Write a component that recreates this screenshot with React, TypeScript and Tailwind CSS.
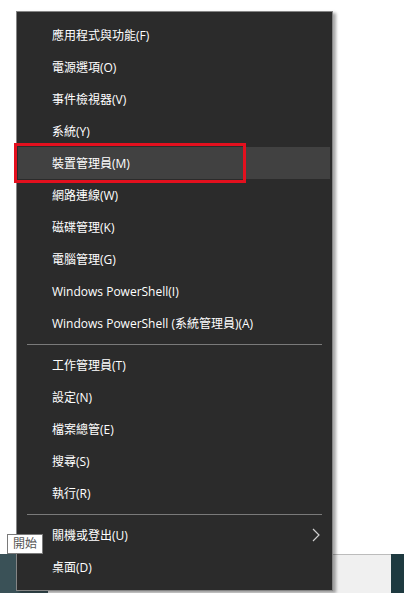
const groups = [
  [
    '應用程式與功能(F)',
    '電源選項(O)',
    '事件檢視器(V)',
    '系統(Y)',
    '裝置管理員(M)',
    '網路連線(W)',
    '磁碟管理(K)',
    '電腦管理(G)',
    'Windows PowerShell(I)',
    'Windows PowerShell (系統管理員)(A)',
  ],
  ['工作管理員(T)', '設定(N)', '檔案總管(E)', '搜尋(S)', '執行(R)'],
  ['關機或登出(U)', '桌面(D)'],
];

const HOVERED = '裝置管理員(M)';

function Chevron() {
  return (
    <svg width="8" height="14" viewBox="0 0 8 14" className="text-[#d0d0d0]">
      <path d="M1 1l6 6-6 6" fill="none" stroke="currentColor" strokeWidth="1.2" />
    </svg>
  );
}

function MenuItem({ label }: { label: string }) {
  const hovered = label === HOVERED;
  return (
    <div
      className={`relative flex h-8 items-center ml-px mr-[2px] pl-[34px] pr-[10px] ${
        hovered ? 'bg-[#414141]' : ''
      }`}
    >
      <span className="flex-1 whitespace-nowrap pt-px">{label}</span>
      {label === '關機或登出(U)' && <Chevron />}
      {hovered && (
        <div className="absolute left-[-4px] top-[-4px] h-10 w-[232px] border-[3px] border-[#e3101e] pointer-events-none" />
      )}
    </div>
  );
}

export default function App() {
  return (
    <div
      className="relative w-[404px] h-[593px] overflow-hidden bg-white"
      style={{ fontFamily: '"Open Sans", "Noto Sans CJK TC", sans-serif' }}
    >
      <div className="h-[554px]" />
      <div className="flex h-[39px]">
        <div className="w-12 bg-[#3a5157]" />
        <div className="flex-1 bg-[#f0f0f0] border-t border-[#bcbcbc]" />
        <div className="w-[13px] bg-[#1e3a40]" />
      </div>

      <div className="absolute left-4 top-[11px] w-[317px] h-[580px] bg-[#2b2b2b] border border-[#858585] py-[7px] text-[12px] text-white shadow-[3px_2px_3px_rgba(0,0,0,0.35)]">
        {groups.map((items, gi) => (
          <div key={gi}>
            {gi > 0 && (
              <div className="flex h-[10px] items-center px-[10px]">
                <div className="h-px flex-1 bg-[#7a7a7a]" />
              </div>
            )}
            {items.map((label) => (
              <MenuItem key={label} label={label} />
            ))}
          </div>
        ))}
      </div>

      <div className="absolute left-[7px] top-[534px] h-5 px-[5px] flex items-center bg-white border border-[#7a7a7a] text-[12px] text-[#575757]">
        開始
      </div>
    </div>
  );
}
